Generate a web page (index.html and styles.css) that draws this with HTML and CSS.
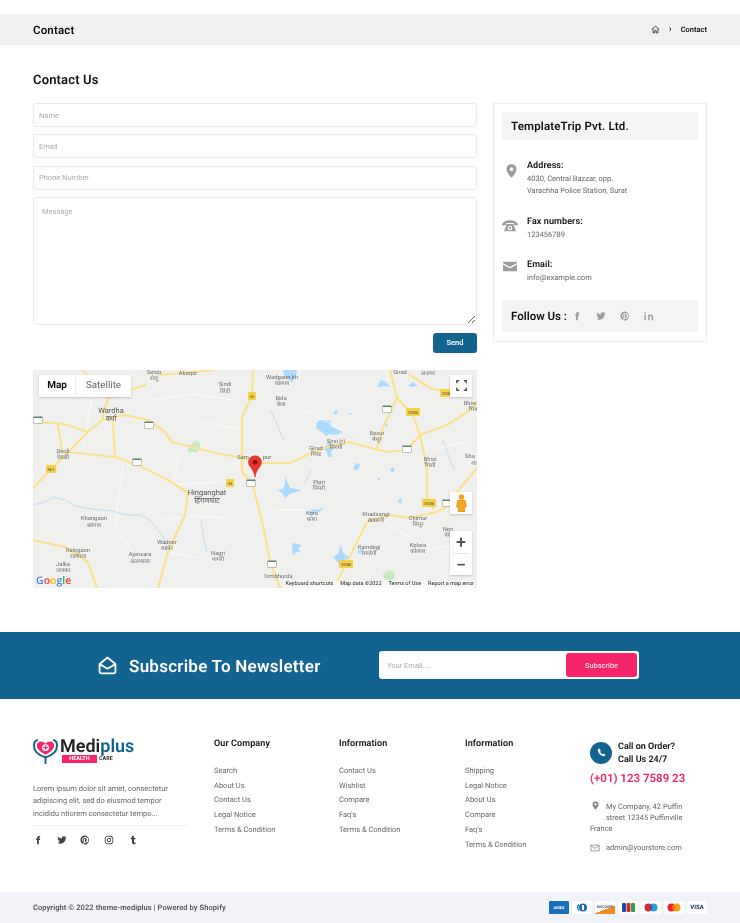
FILE: index.html
```html
<!DOCTYPE html>
<html lang="en">
<head>
  <meta charset="UTF-8">
  <meta name="viewport" content="width=device-width, initial-scale=1.0">
  <title>Contact</title>
  <link rel="stylesheet" href="styles.css">
</head>
<body>
  <svg class="sprite" xmlns="http://www.w3.org/2000/svg">
    <symbol id="i-fb" viewBox="0 0 24 24"><path d="M14 8.500V6.800c0-.8.500-1 1-1h2V2.200h-2.900C11 2.200 9.800 4.400 9.800 6.400v2.100H7.500V12h2.300v10H14V12h2.800l.4-3.500z"/></symbol>
    <symbol id="i-tw" viewBox="0 0 24 24"><path d="M23 5c-.8.400-1.700.600-2.600.700.900-.6 1.600-1.400 2-2.500-.9.500-1.900.900-2.900 1.100A4.500 4.500 0 0 0 11.800 8.400c-3.800-.2-7.100-2-9.300-4.800-1.200 2-.6 4.700 1.400 6-.7 0-1.400-.2-2-.6 0 2.200 1.500 4 3.600 4.500-.7.200-1.400.2-2 .1.600 1.800 2.200 3.100 4.200 3.100A9 9 0 0 1 1 18.600 12.800 12.800 0 0 0 20.700 7.200c.9-.6 1.700-1.400 2.300-2.200z"/></symbol>
    <symbol id="i-pin" viewBox="0 0 24 24"><path fill-rule="evenodd" d="M12 1a11 11 0 0 0-4 21.200c-.1-.9-.2-2.200 0-3.100l1.300-5.500s-.3-.7-.3-1.600c0-1.500.9-2.700 2-2.700 1 0 1.400.7 1.400 1.600 0 1-.6 2.400-1 3.800-.2 1.100.6 2 1.700 2 2 0 3.500-2.100 3.500-5.200 0-2.700-1.900-4.600-4.700-4.600-3.200 0-5 2.400-5 4.800 0 1 .4 2 .9 2.600v.5l-.3 1.300c-1.500-.7-2.400-2.800-2.400-4.500 0-3.700 2.700-7 7.700-7 4 0 7.200 2.900 7.200 6.700 0 4-2.500 7.200-6 7.200-1.200 0-2.300-.6-2.700-1.300l-.7 2.800c-.3 1-.9 2.200-1.400 3A11 11 0 1 0 12 1z"/></symbol>
    <symbol id="i-in" viewBox="0 0 24 24"><path d="M4.500 8.500H1V22h3.500zM2.800 2.200a2 2 0 1 0 0 4 2 2 0 0 0 0-4zM22 14.500c0-3.500-1.800-6.200-5-6.200-1.600 0-2.700.8-3.300 1.700V8.500H10V22h3.500v-7c0-1.800.8-3 2.400-3s2.400 1.200 2.400 3v7H22z"/></symbol>
    <symbol id="i-ig" viewBox="0 0 24 24"><rect x="3" y="3" width="18" height="18" rx="5" fill="none" stroke="currentColor" stroke-width="2.200"/><circle cx="12" cy="12" r="4" fill="none" stroke="currentColor" stroke-width="2.200"/><circle cx="17" cy="7" r="1.300"/></symbol>
    <symbol id="i-tu" viewBox="0 0 24 24"><path d="M14 2h-3.500c-.2 2.600-1.500 4.200-3.500 5v3h2.500v6.500c0 3.500 2.200 5.500 5.500 5.500 1.300 0 2.500-.3 3.500-.8v-3.500c-.7.400-1.400.6-2 .6-1.400 0-2-.7-2-2.300V10h3.500V7H14z"/></symbol>
    <symbol id="s-nh" viewBox="0 0 10 8"><rect x=".4" y=".4" width="9.200" height="7.200" rx="1.500" fill="#fff" stroke="#8a968a" stroke-width=".6"/><rect x=".8" y=".8" width="8.400" height="1.200" fill="#5f8568"/></symbol>
  </svg>

  <div class="crumbs">
    <span class="crumbs-title">Contact</span>
    <span class="crumbs-path">
      <svg class="home" viewBox="0 0 24 24"><path d="M2 12 12 3l10 9M5.500 9.500V21h4.500v-6h4v6h4.500V9.500" fill="none" stroke="#222" stroke-width="2"/></svg>
      <span class="sep">&rsaquo;</span>
      <b>Contact</b>
    </span>
  </div>

  <main class="page">
    <h2 class="page-title">Contact Us</h2>
    <div class="contact-grid">
      <div>
        <form class="contact-form">
          <input class="field" type="text" placeholder="Name">
          <input class="field" type="text" placeholder="Email">
          <input class="field" type="text" placeholder="Phone Number">
          <textarea class="field field-msg" placeholder="Message"></textarea>
          <div class="send-row"><button class="send" type="button">Send</button></div>
        </form>

        <div class="map">
          <svg class="map-art" viewBox="0 0 444 218" xmlns="http://www.w3.org/2000/svg">
            <rect width="444" height="218" fill="#f0f0ee"/>
            <path d="M155 78c4-5 8-8 11-6 2 4 1 8-2 10-4 1-5-1-7 1-2-1-3-3-2-5zM350 205c3-5 9-6 12-2 1 5-3 8-6 7-3 0-6-2-6-5z" fill="#c6e8c4"/>
            <g fill="#aadaff">
              <path d="M284 52c6-5 9 0 13-2l2 7 11 5-7 3-8-1-1 3-5-5-6-4zM296 70l3 5 2 4-3 2 1 6-3 0-3-6-3-3 4-3z"/>
              <path d="M252 107l3 6 2 5 12 2-12 4-5 4-2-4-5-4 6-2 1-6z"/>
              <path d="M250 0h14l-1 6-4 6-4-3-4-4zM344 17l4-7 5 2 4 5-6-1-4 1zM375 16l5-4 4 3-4 2z"/>
              <path d="M320 99l3-6 4 1-1 5-3 1zM357 99l3-2 2 3-3 3zM365 132l2-4 2 1-1 5zM300 43l3-3 2 2-2 3zM315 44l2-1 2 1-2 1zM352 55l2-1 1 2-2 1zM345 108l2 0 0 2-2 0zM275 143l5-4 5 1 7-3-6 5-4 0-1 2z"/>
              <path d="M260 173l9 2-4 4 3 2-6 2-2 3-1-7zM308 175l2 8 7 5-6 2-3 8-3-5-5-6 5-3zM324 181l8-3-3 4-3 2z"/>
            </g>
            <g fill="none" stroke="#bfe0f4" stroke-width="1">
              <path d="M0 135l12-3 8-5 12 3 10 6 16 3 20 2 16 4 14 0 10 6 6 8 6 8 6 14M168 150c2 10 2 20 6 32M237 40c6 10 10 22 14 30M278 100c-2 6-4 10-8 16M410 70c4 10 6 20 12 30"/>
            </g>
            <g fill="none" stroke="#fff" stroke-width=".9" opacity=".85">
              <path d="M120 30l40-6 40 6M146 85l-6 30 60-4M130 150l30-4 36 2M135 182l30 6M240 140l30 0 20 20M60 20l-10 60M400 80l30-8 14 30M348 150l50 30 40-10M210 60l-40-8M270 40l40 20M90 95l-8 60 20 30"/>
            </g>
            <g fill="none" stroke="#fbe28e" stroke-width="2.200" stroke-linejoin="round" stroke-linecap="round">
              <path d="M69 50 92 45 115 50 132 62 139 72 159 77 182 83 205 87 230 93 257 93 274 85 294 77 317 72 334 77 354 82 374 80 387 65 414 55 430 45 444 33"/>
              <path d="M69 50 55 62 35 55 22 53 0 52"/>
              <path d="M55 62 35 82 82 87 109 97 135 110 155 123 152 145 135 182 125 218"/>
              <path d="M112 15 75 28 69 50M49 0 75 25M125 5 182 0M80 52 82 87M25 55 29 82M35 82 0 118"/>
              <path d="M220 0 219 25 209 48 209 102 219 112 230 155 237 192 247 218"/>
              <path d="M0 170 32 177 55 192 64 218"/>
              <path d="M357 0 364 28 350 58 344 78M364 28 380 45 387 65 394 98 394 128 400 138"/>
              <path d="M377 5 397 18 417 23M304 212 324 172 334 152 357 145 377 148 404 142 417 135M444 98 424 122"/>
            </g>
            <g class="shields-y">
              <rect x="215" y="22" width="8" height="8" rx="1"/><rect x="193" y="109" width="8" height="8" rx="1"/><rect x="13" y="95" width="10" height="8" rx="1"/>
              <rect x="373" y="38" width="14" height="8" rx="1"/><rect x="389" y="129" width="14" height="8" rx="1"/><rect x="306" y="190" width="14" height="8" rx="1"/><rect x="407" y="19" width="14" height="8" rx="1"/>
            </g>
            <g class="shield-num">
              <text x="219" y="28">44</text><text x="197" y="115">44</text><text x="18" y="101">361</text>
              <text x="380" y="44">353B</text><text x="396" y="135">353B</text><text x="313" y="196">353B</text><text x="414" y="25">353B</text>
            </g>
            <use href="#s-nh" x="0" y="46" width="10" height="8"/><use href="#s-nh" x="111" y="51" width="10" height="8"/><use href="#s-nh" x="99" y="88" width="10" height="8"/>
            <use href="#s-nh" x="213" y="109" width="10" height="8"/><use href="#s-nh" x="234" y="190" width="10" height="8"/><use href="#s-nh" x="369" y="75" width="10" height="8"/>
            <use href="#s-nh" x="349" y="35" width="10" height="8"/><use href="#s-nh" x="409" y="129" width="10" height="8"/>
            <g class="labels">
              <text x="121" y="4">Seloo</text><text x="121" y="10">सेलू</text>
              <text x="155" y="5">Akarpir</text>
              <text x="192" y="16">Sindi</text><text x="192" y="23">सिंदी</text>
              <text x="249" y="9">Wadgaon kh</text><text x="249" y="15">वडगाव</text>
              <text x="248" y="30">Bela</text><text x="248" y="36">बेला</text>
              <text x="283" y="80">Girad</text><text x="283" y="86">गिरड</text>
              <text x="303" y="73">Sirsi (r)</text><text x="303" y="79">सिरसी</text>
              <text x="344" y="65">Besur</text><text x="344" y="71">बेसूर</text>
              <text x="367" y="4">Girad</text><text x="395" y="5">अजगर</text>
              <text x="30" y="83">Deoli</text><text x="30" y="89">देवळी</text>
              <text x="210" y="89">Sam</text><text x="234" y="89">pur</text>
              <text x="397" y="91">Bhisi</text><text x="397" y="97">भिसी</text>
              <text x="437" y="35">Bhiw</text><text x="440" y="41">भिव</text>
              <text x="437" y="88">Sha</text><text x="441" y="95">शा</text>
              <text x="286" y="114">Pipri</text><text x="286" y="120">पिपरी</text>
              <text x="279" y="145">Kora</text><text x="279" y="151">कोरा</text>
              <text x="343" y="146">Khadsangi</text><text x="343" y="152">खडसंगी</text>
              <text x="385" y="150">Chimur</text><text x="385" y="156">चिमूर</text>
              <text x="336" y="179">Ramdegi</text><text x="336" y="185">रामदेगी</text>
              <text x="385" y="177">Kolara</text><text x="385" y="183">कोलारा</text>
              <text x="415" y="161">Neri</text><text x="415" y="167">नेरी</text>
              <text x="61" y="150">Khangaon</text><text x="61" y="157">खांगाव</text>
              <text x="134" y="174">Wadner</text><text x="134" y="180">वडनेर</text>
              <text x="45" y="182">Ralegaon</text><text x="45" y="188">रालेगाव</text>
              <text x="107" y="186">Ajansara</text><text x="107" y="193">अजनसरा</text>
              <text x="185" y="185">Nagri</text><text x="185" y="191">नागरी</text>
              <text x="30" y="196">Jalka</text><text x="30" y="202">जलका</text>
              <text x="245" y="208">Tembhurda</text>
            </g>
            <g class="labels-big">
              <text x="78" y="43">Wardha</text><text x="78" y="51">वर्धा</text>
              <text x="174" y="125">Hinganghat</text><text x="174" y="133">हिंगणघाट</text>
            </g>
          </svg>

          <svg class="marker" viewBox="0 0 27 43"><path d="M13.500 1C6.500 1 1 6.500 1 13.300c0 4 2 6.800 4.500 10.300 3.500 5 6.500 10 8 18.400 1.500-8.400 4.500-13.400 8-18.400 2.500-3.500 4.500-6.300 4.500-10.300C26 6.500 20.500 1 13.500 1z" fill="#e8372c" stroke="#c5221f"/><circle cx="13.500" cy="13.500" r="4.500" fill="#7d0f0c"/></svg>

          <div class="map-type"><span class="map-on">Map</span><span class="map-off">Satellite</span></div>
          <div class="map-btn map-full">
            <svg viewBox="0 0 14 14" width="11" height="11"><path d="M1 4V1h3M10 1h3v3M13 10v3h-3M4 13H1v-3" fill="none" stroke="#555" stroke-width="1.800"/></svg>
          </div>
          <div class="map-btn map-peg">
            <svg viewBox="0 0 12 20" width="11" height="18"><circle cx="6" cy="3.200" r="3" fill="#f5a623"/><path d="M1.500 7.500q4.500-2 9 0l1 7H9.500V20h-7v-5.500H.5z" fill="#f5a623" stroke="#c97f10" stroke-width=".6"/></svg>
          </div>
          <div class="map-zoom"><span class="zoom-btn">+</span><i class="zoom-line"></i><span class="zoom-btn">&minus;</span></div>

          <div class="google"><span class="g-b">G</span><span class="g-r">o</span><span class="g-y">o</span><span class="g-b">g</span><span class="g-g">l</span><span class="g-r">e</span></div>
          <div class="map-foot"><span>Keyboard shortcuts</span><span>Map data ©2022</span><span>Terms of Use</span><span>Report a map error</span></div>
        </div>
      </div>

      <aside class="info">
        <h3 class="info-title">TemplateTrip Pvt. Ltd.</h3>
        <div class="info-row info-addr">
          <svg class="info-icon" viewBox="0 0 24 24"><path fill-rule="evenodd" d="M12 1a8 8 0 0 0-8 8c0 5.500 8 14 8 14s8-8.500 8-14a8 8 0 0 0-8-8zm0 11a3 3 0 1 1 0-6 3 3 0 0 1 0 6z"/></svg>
          <div><h4>Address:</h4><p>4030, Central Bazzar, opp.<br>Varachha Police Station, Surat</p></div>
        </div>
        <div class="info-row info-fax">
          <svg class="info-icon" viewBox="0 0 24 24"><path fill-rule="evenodd" d="M0 9c3-4 7-5.500 12-5.500S21 5 24 9l-1 2.500-5-1.500V7.500H6V10l-5 1.500zM7 9h10l4 11H3zm5 2.500a3.500 3.500 0 1 0 0 7 3.500 3.500 0 0 0 0-7zm0 1.800a1.700 1.700 0 1 1 0 3.400 1.700 1.700 0 0 1 0-3.400z"/></svg>
          <div><h4>Fax numbers:</h4><p>123456789</p></div>
        </div>
        <div class="info-row info-mail">
          <svg class="info-icon" viewBox="0 0 24 24"><path d="M1 4h22a1 1 0 0 1 1 1v1l-12 7L0 6V5a1 1 0 0 1 1-1zM0 8.500l12 7 12-7V19a1 1 0 0 1-1 1H1a1 1 0 0 1-1-1z"/></svg>
          <div><h4>Email:</h4><p>info@example.com</p></div>
        </div>
        <div class="follow">
          <span class="follow-label">Follow Us :</span>
          <svg class="follow-icon"><use href="#i-fb"/></svg>
          <svg class="follow-icon"><use href="#i-tw"/></svg>
          <svg class="follow-icon"><use href="#i-pin"/></svg>
          <svg class="follow-icon"><use href="#i-in"/></svg>
        </div>
      </aside>
    </div>
  </main>

  <section class="news">
    <svg class="news-icon" viewBox="0 0 24 24"><path d="M2 10 12 2l10 8v10a2 2 0 0 1-2 2H4a2 2 0 0 1-2-2zM2.500 10.500 12 16l9.500-5.500" fill="none" stroke="#fff" stroke-width="2.300" stroke-linejoin="round"/></svg>
    <h2 class="news-title">Subscribe To Newsletter</h2>
    <form class="news-form">
      <input class="news-input" type="text" placeholder="Your Email....">
      <button class="news-btn" type="button">Subscribe</button>
    </form>
  </section>

  <footer class="foot">
    <div class="foot-about">
      <div class="logo">
        <svg class="logo-mark" viewBox="0 0 26 28">
          <path d="M5 2C2 2.500 1 5 1 8c0 6 5 10 12 12 7-2 12-6 12-12 0-3-1-5.500-4-6" fill="none" stroke="#12638f" stroke-width="2"/>
          <path d="M13 20v7" stroke="#12638f" stroke-width="2"/>
          <path d="M13 17.500C7 14 4 11 4 7.500c0-4 5.500-5.500 9-1.500 3.500-4 9-2.500 9 1.500 0 3.500-3 6.500-9 10z" fill="#f6246a"/>
          <circle cx="13" cy="10" r="3.600" fill="#fff"/>
          <path d="M13 7.800v4.400M10.800 10h4.400" stroke="#f6246a" stroke-width="1.400"/>
        </svg>
        <div class="logo-text">
          <div class="logo-name">Medi<span>plus</span></div>
          <div class="logo-sub"><span class="logo-badge">HEALTH</span><span class="logo-care">CARE</span></div>
        </div>
      </div>
      <p class="about-text">Lorem ipsum dolor sit amet, consectetur adipiscing elit, sed do eiusmod tempor incididu ntiorem consectetur tempo...</p>
      <div class="foot-social">
        <svg class="soc"><use href="#i-fb"/></svg>
        <svg class="soc"><use href="#i-tw"/></svg>
        <svg class="soc"><use href="#i-pin"/></svg>
        <svg class="soc"><use href="#i-ig"/></svg>
        <svg class="soc"><use href="#i-tu"/></svg>
      </div>
    </div>
    <div class="foot-col">
      <h4>Our Company</h4>
      <a>Search</a><a>About Us</a><a>Contact Us</a><a>Legal Notice</a><a>Terms &amp; Condition</a>
    </div>
    <div class="foot-col">
      <h4>Information</h4>
      <a>Contact Us</a><a>Wishlist</a><a>Compare</a><a>Faq's</a><a>Terms &amp; Condition</a>
    </div>
    <div class="foot-col">
      <h4>Information</h4>
      <a>Shipping</a><a>Legal Notice</a><a>About Us</a><a>Compare</a><a>Faq's</a><a>Terms &amp; Condition</a>
    </div>
    <div class="foot-call">
      <div class="call-top">
        <span class="call-round"><svg viewBox="0 0 24 24" width="9" height="9"><path d="M6.600 1.500 3 3c-1 .5-1.500 1.500-1.200 3 1.500 8 8 14.700 16 16.200 1.500.3 2.500-.2 3-1.200l1.500-3.600-5-2.900-2 2.400c-3-1.400-5.800-4.200-7.200-7.200l2.400-2z" fill="#fff"/></svg></span>
        <span class="call-text">Call on Order?<br>Call Us 24/7</span>
      </div>
      <div class="call-num">(+01) 123 7589 23</div>
      <p class="call-addr">
        <svg class="call-ico ico-pin" viewBox="0 0 24 24"><path fill-rule="evenodd" d="M12 1a8 8 0 0 0-8 8c0 5.500 8 14 8 14s8-8.500 8-14a8 8 0 0 0-8-8zm0 11a3 3 0 1 1 0-6 3 3 0 0 1 0 6z"/></svg>
        My Company, 42 Puffin<br><span class="addr-in">street 12345 Puffinville</span><br>France
      </p>
      <p class="call-mail">
        <svg class="call-ico ico-mail" viewBox="0 0 24 24"><path d="M2 5h20v14H2zM2 6l10 7 10-7" fill="none" stroke="#888" stroke-width="2"/></svg>
        admin@yourstore.com
      </p>
    </div>
  </footer>

  <div class="bottom">
    <span class="copy">Copyright © 2022 theme-mediplus | Powered by Shopify</span>
    <div class="pay">
      <span class="card card-amex">AMEX</span>
      <span class="card"><svg viewBox="0 0 20 13"><circle cx="11" cy="6.500" r="4" fill="#1a6fb0"/><path d="M7 3.500a4 4 0 0 0 0 6M9.500 3.500v6" fill="none" stroke="#1a6fb0" stroke-width="1.200"/><rect x="10" y="4" width="2" height="5" fill="#fff"/></svg></span>
      <span class="card card-disc">DISCOVER</span>
      <span class="card"><svg viewBox="0 0 20 13"><rect x="4" y="2" width="4" height="9" rx="1" fill="#1a4fa0"/><rect x="8.500" y="2" width="4" height="9" rx="1" fill="#d9263a"/><rect x="13" y="2" width="4" height="9" rx="1" fill="#2e9e4a"/></svg></span>
      <span class="card"><svg viewBox="0 0 20 13"><circle cx="7.500" cy="6.500" r="4" fill="#e0252d"/><circle cx="12.500" cy="6.500" r="4" fill="#2a9fdc"/><path d="M10 3.400a4 4 0 0 1 0 6.200 4 4 0 0 1 0-6.200z" fill="#5a4a9a"/></svg></span>
      <span class="card"><svg viewBox="0 0 20 13"><circle cx="7.500" cy="6.500" r="4" fill="#e8232b"/><circle cx="12.500" cy="6.500" r="4" fill="#f7a11b"/><path d="M10 3.400a4 4 0 0 1 0 6.200 4 4 0 0 1 0-6.200z" fill="#f26a1f"/></svg></span>
      <span class="card card-visa">VISA</span>
    </div>
  </div>
</body>
</html>
```

FILE: styles.css
```css
* { box-sizing: border-box; }

body {
  margin: 0;
  background: #fff;
  color: #111;
  font-family: Roboto, "Liberation Sans", sans-serif;
  text-rendering: geometricPrecision;
  will-change: transform;
}

.sprite { display: none; }

/* breadcrumb */
.crumbs {
  margin-top: 14px;
  height: 31px;
  padding: 0 33px;
  background: #f1f1f1;
  display: flex;
  align-items: center;
  justify-content: space-between;
}
.crumbs-title { font-size: 11.500px; font-weight: 600; letter-spacing: .15px; }
.crumbs-path { display: flex; align-items: center; font-size: 7.500px; }
.crumbs-path b { font-weight: 600; }
.home { width: 9px; height: 9px; }
.sep { margin: 0 9px; font-size: 10px; line-height: 8px; }

/* main */
.page { padding: 0 33px; }
.page-title {
  margin: 28px 0 14px;
  font-size: 13px;
  line-height: 16px;
  font-weight: 600;
  letter-spacing: .15px;
}
.contact-grid {
  display: grid;
  grid-template-columns: 444px 214px;
  column-gap: 16px;
  align-items: start;
}

.field {
  display: block;
  width: 100%;
  height: 24px;
  margin-bottom: 7.300px;
  padding: 0 5px;
  border: 1px solid #eaeaea;
  border-radius: 3px;
  font-family: inherit;
  font-size: 7.500px;
  background: #fff;
}
.field::placeholder { color: #aaa; }
.field-msg { height: 128px; margin-bottom: 0; padding: 9px 8px; resize: vertical; }
.send-row { display: flex; justify-content: flex-end; margin-top: 8px; }
.send {
  width: 44px;
  height: 20px;
  border: 0;
  border-radius: 3px;
  background: #12638f;
  color: #fff;
  font-family: inherit;
  font-size: 7.500px;
  font-weight: 600;
}

/* map */
.map { position: relative; margin-top: 17px; height: 218px; overflow: hidden; }
.map-art { display: block; width: 444px; height: 218px; }
.shields-y rect { fill: #f5d245; }
.shield-num text { font: 500 4px Roboto, sans-serif; fill: #555; text-anchor: middle; }
.labels text { font: 5.800px Roboto, sans-serif; fill: #6b6b6b; text-anchor: middle; }
.labels-big text { font: 7.500px Roboto, sans-serif; fill: #555; text-anchor: middle; }
.marker { position: absolute; left: 215px; top: 85px; width: 14px; height: 23px; }
.map-type {
  position: absolute;
  left: 6px;
  top: 5px;
  height: 22px;
  display: flex;
  background: #fff;
  box-shadow: 0 1px 2px rgba(0,0,0,.2);
  font-size: 10px;
  color: #666;
  line-height: 22px;
}
.map-on { width: 37px; text-align: center; color: #000; font-weight: 600; border-right: 1px solid #eee; }
.map-off { width: 55px; text-align: center; font-size: 9.800px; }
.map-btn {
  position: absolute;
  left: 417px;
  width: 22px;
  height: 22px;
  background: #fff;
  display: flex;
  align-items: center;
  justify-content: center;
  box-shadow: 0 1px 2px rgba(0,0,0,.2);
}
.map-full { top: 5px; }
.map-peg { top: 122px; }
.map-zoom {
  position: absolute;
  left: 417px;
  top: 161px;
  width: 22px;
  height: 44px;
  background: #fff;
  box-shadow: 0 1px 2px rgba(0,0,0,.2);
  display: flex;
  flex-direction: column;
  align-items: center;
}
.zoom-btn { height: 22px; line-height: 23px; font-size: 18px; font-weight: 500; color: #555; }
.zoom-line { width: 16px; height: 1px; background: #e6e6e6; flex: none; }
.google {
  position: absolute;
  left: 3px;
  bottom: 0;
  font-family: "Open Sans", sans-serif;
  font-size: 10.500px;
  font-weight: 600;
  line-height: 14px;
}
.g-b { color: #4285f4; }
.g-r { color: #ea4335; }
.g-y { color: #fbbc05; }
.g-g { color: #34a853; }
.map-foot {
  position: absolute;
  right: 3px;
  bottom: 0;
  display: flex;
  gap: 7px;
  height: 7px;
  padding-left: 2px;
  background: rgba(255,255,255,.6);
  font-size: 5.500px;
  line-height: 7px;
  color: #222;
}

/* side box */
.info { height: 239px; padding: 8px; border: 1px solid #ececec; }
.info-title {
  margin: 0;
  height: 28px;
  padding-left: 9px;
  background: #f4f4f4;
  font-size: 11.500px;
  font-weight: 600;
  line-height: 28px;
  letter-spacing: .15px;
}
.info-row { display: flex; position: relative; padding-left: 25px; }
.info-row h4 { margin: 0; font-size: 9px; font-weight: 600; line-height: 12px; letter-spacing: .1px; }
.info-row p { margin: 1px 0 0; font-size: 7.500px; line-height: 12px; color: #666; }
.info-addr { margin-top: 20px; }
.info-fax { margin-top: 19px; }
.info-mail { margin-top: 18px; }
.info-icon { position: absolute; fill: #9c9c9c; }
.info-addr .info-icon { left: 2px; top: 3px; width: 15px; height: 16px; }
.info-fax .info-icon { left: 0; top: 2px; width: 16px; height: 16px; }
.info-mail .info-icon { left: 1px; top: 0; width: 14px; height: 15px; }
.follow {
  margin-top: 16px;
  height: 32px;
  padding-left: 9px;
  background: #f4f4f4;
  display: flex;
  align-items: center;
}
.follow-label { font-size: 11.500px; font-weight: 600; margin-right: 5px; }
.follow-icon { width: 10px; height: 10px; margin-right: 14px; fill: #9c9c9c; }

/* newsletter */
.news {
  margin-top: 44px;
  height: 67px;
  padding-left: 98px;
  background: #12638f;
  display: flex;
  align-items: center;
}
.news-icon { width: 19px; height: 19px; }
.news-title {
  margin: 0 0 0 12px;
  padding-top: 3px;
  width: 250px;
  color: #fff;
  font-size: 17px;
  font-weight: 600;
  letter-spacing: .25px;
}
.news-form {
  width: 260px;
  height: 28px;
  padding: 2px;
  background: #fff;
  border-radius: 3px;
  display: flex;
}
.news-input {
  flex: 1;
  min-width: 0;
  border: 0;
  padding: 0 6px;
  font-family: inherit;
  font-size: 7.500px;
}
.news-input::placeholder { color: #aaa; }
.news-btn {
  width: 71px;
  border: 0;
  border-radius: 3px;
  background: #f6246a;
  color: #fff;
  font-family: inherit;
  font-size: 7.500px;
}

/* footer */
.foot {
  height: 193px;
  padding: 39px 0 0 33px;
  display: grid;
  grid-template-columns: 181px 125px 126px 125px 1fr;
  align-items: start;
}
.logo { display: flex; height: 27px; }
.logo-mark { width: 25px; height: 27px; }
.logo-text { margin-left: 2px; }
.logo-name { height: 16px; padding-top: 1px; font-size: 18px; font-weight: 600; line-height: 16px; color: #222; }
.logo-name span { color: #12638f; }
.logo-sub { display: flex; align-items: center; margin: 1px 0 0 2px; height: 8px; font-size: 5.500px; font-weight: 700; }
.logo-badge { background: #f6246a; color: #fff; width: 35px; text-align: center; line-height: 8px; }
.logo-care { margin-left: 2px; color: #333; }
.about-text {
  width: 156px;
  margin: 18px 0 0;
  padding-bottom: 5px;
  border-bottom: 1px solid #eee;
  font-size: 7.500px;
  line-height: 12.500px;
  color: #666;
}
.foot-social { display: flex; margin-top: 9px; }
.soc { width: 10px; height: 10px; margin-right: 13.700px; fill: #444; color: #444; }

.foot-col h4 { margin: 1px 0 14px; font-size: 9px; line-height: 11px; font-weight: 600; letter-spacing: .1px; }
.foot-col a { display: block; font-size: 7.500px; line-height: 14.800px; color: #666; }

.foot-call { padding-top: 2px; margin-top: -1px; }
.call-top { display: flex; align-items: center; }
.call-round {
  width: 22px;
  height: 22px;
  border-radius: 50%;
  background: #12638f;
  display: flex;
  align-items: center;
  justify-content: center;
}
.call-text { margin-left: 6px; padding-top: 2px; font-size: 9px; line-height: 13px; font-weight: 600; }
.call-num { margin-top: 4px; color: #f6246a; font-size: 11.500px; font-weight: 600; line-height: 14px; }
.call-addr, .call-mail { position: relative; margin: 0; font-size: 7.500px; color: #666; }
.call-addr { margin-top: 16px; line-height: 11px; text-indent: 16px; }
.call-addr .addr-in { padding-left: 16px; }
.call-mail { margin-top: 8px; line-height: 12px; padding-left: 16px; }
.call-ico { position: absolute; left: 0; width: 10px; height: 10px; }
.ico-pin { fill: #888; left: 1px; top: 0; width: 9px; height: 9px; }
.ico-mail { top: 1px; }

/* bottom bar */
.bottom {
  height: 31px;
  padding: 0 33px;
  background: #f1f3f8;
  display: flex;
  align-items: center;
  justify-content: space-between;
}
.copy { font-size: 7.500px; font-weight: 600; color: #555; letter-spacing: .08px; }
.pay { display: flex; gap: 3px; }
.card {
  width: 20px;
  height: 13px;
  background: #fff;
  border-radius: 1px;
  font-size: 4px;
  font-weight: 700;
  line-height: 13px;
  text-align: center;
  display: block;
  overflow: hidden;
}
.card svg { display: block; width: 20px; height: 13px; }
.card-amex { background: #1a6fb8; color: #fff; }
.card-disc { color: #555; background: linear-gradient(160deg, #fff 60%, #f08a24 60%); font-size: 3.500px; }
.card-visa { color: #1a2a6c; font-size: 6px; }
```
